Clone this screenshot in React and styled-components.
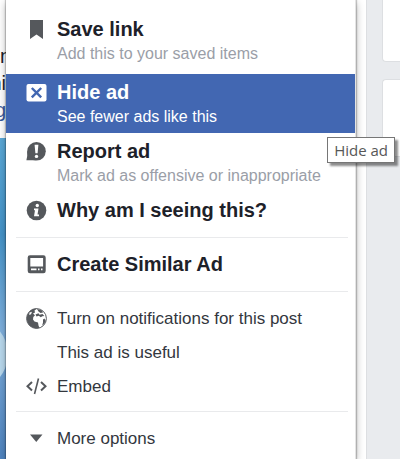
import styled, { createGlobalStyle } from "styled-components";

const colorText = "#1d2129";
const colorPlain = "#33373e";
const colorMuted = "#9a9ea7";
const colorBlue = "#4267b2";
const colorPage = "#e9ebee";
const colorLine = "#dddfe2";
const colorIcon = "#55585c";

const GlobalStyle = createGlobalStyle`
    * {
        box-sizing: border-box;
    }
    body {
        margin: 0;
        overflow: hidden;
        background-color: ${colorPage};
        font-family: "Liberation Sans", Arial, sans-serif;
        color: ${colorText};
    }
`;

const Page = styled.main`
    position: relative;
    display: flex;
    height: 100vh;
    overflow: hidden;
`;

const Feed = styled.section`
    flex: 1;
    background-color: #fff;
    border-right: 1px solid ${colorLine};
`;

const FeedText = styled.div`
    height: 138px;
    padding-top: 43px;
    font-size: 20px;
    line-height: 27px;
`;

const FeedLine = styled.div`
    display: flex;
    justify-content: ${props => props.$start ? "flex-start" : "flex-end"};
    width: 6px;
    color: ${props => props.$link ? "#365899" : colorText};
`;

const FeedPicture = styled.svg`
    display: block;
    width: 90%;
    height: 321px;
`;

const Sidebar = styled.aside`
    display: flex;
    flex-direction: column;
    gap: 17px;
    width: 33px;
    padding-left: 15px;
`;

const SidebarCard = styled.div`
    height: ${props => props.$first ? "62px" : "78px"};
    background-color: #fff;
    border: 1px solid ${colorLine};
    border-width: ${props => props.$first ? "0 0 1px 1px" : "1px 0 1px 1px"};
    border-radius: ${props => props.$first ? "0 0 0 4px" : "4px 0 0 4px"};
`;

const Menu = styled.nav`
    position: absolute;
    top: 0;
    bottom: 0;
    left: 6px;
    right: 44px;
    padding-top: 11px;
    background-color: #fff;
    border-right: 1px solid #e4e4e4;
    box-shadow: 0 0 1px 1px rgba(0, 0, 0, 0.2), 0 3px 8px rgba(0, 0, 0, 0.3);
`;

const MenuGroup = styled.div`
    & + & {
        margin-top: 4px;
    }
`;

const MenuItem = styled.button`
    display: grid;
    grid-template-columns: 21px 1fr;
    column-gap: 10px;
    width: 100%;
    padding: ${props => props.$plain ? "6px 20px 4px" : "6px 20px"};
    border: 0;
    background-color: ${props => props.$active ? colorBlue : "transparent"};
    color: ${props => props.$active ? "#fff" : colorIcon};
    font-family: inherit;
    text-align: left;
    white-space: nowrap;
    cursor: pointer;
`;

const ItemIcon = styled.span`
    display: flex;
    align-items: center;
    justify-content: center;
    height: 24px;
`;

const ItemTitle = styled.span`
    color: ${props => props.$active ? "#fff" : props.$plain ? colorPlain : colorText};
    font-size: ${props => props.$plain ? "17px" : "20px"};
    font-weight: ${props => props.$plain ? 400 : 700};
    line-height: ${props => props.$plain ? "26px" : "24px"};
    height: 24px;
`;

const ItemNote = styled.span`
    grid-column: 2;
    padding-top: 2px;
    color: ${props => props.$active ? "#fff" : colorMuted};
    font-size: 16px;
    line-height: 21px;
`;

const Separator = styled.hr`
    height: 1px;
    margin: 9px 7px 8px 10px;
    border: 0;
    background-color: #e9eaec;
`;

const Tooltip = styled.div`
    position: absolute;
    top: 137px;
    right: 5px;
    padding: 0 6px;
    background-color: #fff;
    border: 1px solid #767676;
    box-shadow: 3px 3px 2px rgba(0, 0, 0, 0.45);
    color: #575757;
    font-family: "Open Sans", sans-serif;
    font-size: 15px;
    line-height: 24px;
`;

function BookmarkIcon() {
    return (
        <svg width="21" height="21" viewBox="0 0 21 21">
            <path d="M4 1h13v19l-6.500-4.500L4 20z" fill="currentColor" />
        </svg>
    );
}

function HideIcon() {
    return (
        <svg width="21" height="21" viewBox="0 0 21 21">
            <rect x="0.500" y="2" width="20" height="17.500" rx="2" fill="currentColor" />
            <path d="M5.800 6l9.400 9.400M15.200 6l-9.400 9.400" stroke={colorBlue} strokeWidth="2.400" />
        </svg>
    );
}

function ReportIcon() {
    return (
        <svg width="21" height="21" viewBox="0 0 21 21">
            <circle cx="10.500" cy="10.300" r="9.300" fill="currentColor" />
            <path d="M1.200 10.300V15L.4 19.300H10z" fill="currentColor" />
            <path d="M8.600 3.800h3.800l-.8 8.400H9.400z" fill="#fff" />
            <circle cx="10.500" cy="15.400" r="1.700" fill="#fff" />
        </svg>
    );
}

function InfoIcon() {
    return (
        <svg width="21" height="21" viewBox="0 0 21 21">
            <circle cx="10.500" cy="10.500" r="9.800" fill="currentColor" />
            <circle cx="11.300" cy="5.500" r="1.700" fill="#fff" />
            <path d="M8 8.500h4.500l-1 6h1.500v1.800H8l1-6H8z" fill="#fff" />
        </svg>
    );
}

function CreateIcon() {
    return (
        <svg width="21" height="21" viewBox="0 0 21 21">
            <rect x="3" y="2.600" width="15.400" height="15.400" rx="1" fill="none" stroke="currentColor" strokeWidth="2.600" />
            <path d="M3 12.500h15v5H3z" fill="currentColor" />
            <path d="M5 15.300h5.500M12 15.300h1.500M15 15.300h1.500" stroke="#fff" strokeWidth="1.800" />
        </svg>
    );
}

function GlobeIcon() {
    return (
        <svg width="21" height="21" viewBox="0 0 21 21">
            <circle cx="10.500" cy="10.500" r="9.900" fill="#fff" stroke="currentColor" strokeWidth="1" />
            <path d="M11 .6A9.900 9.900 0 1 0 13.500 20L12.500 17.500 12 14.500 8.500 13.500 7 11.500 7.300 9 9 7.200 7 5.500 9 4.500 8.500 2.500z" fill="currentColor" />
            <path d="M9.500 6.500l3-1.200 1 1.500 3-.8 1.800 2-2 .3-1.500 1-2-1.500-2.300.7zM11 1l5 1.500 1 2-2.500.5-2-1.500zM17 11.500l1.500-1 1.200 2.500-1.500 3-2 1.500.8-3z" fill="currentColor" />
            <path d="M3.500 4.500l2.500-.8-1 2.500-1.800.8z" fill="#fff" />
        </svg>
    );
}

function EmbedIcon() {
    return (
        <svg width="21" height="21" viewBox="0 0 21 21" fill="none" stroke="currentColor">
            <path d="M6 6L1.500 10.200 6 14.500M15 6l4.500 4.200L15 14.500" strokeWidth="2" />
            <path d="M12.500 2.500l-4 15.500" strokeWidth="1.600" />
        </svg>
    );
}

function MoreIcon() {
    return (
        <svg width="21" height="21" viewBox="0 0 21 21">
            <path d="M4 6.500h12.500l-6.250 7.500z" fill="currentColor" />
        </svg>
    );
}

function Item({ icon, title, note, active, plain }) {
    return (
        <MenuItem type="button" $active={active} $plain={plain}>
            <ItemIcon aria-hidden="true">{icon}</ItemIcon>
            <ItemTitle $active={active} $plain={plain}>{title}</ItemTitle>
            {note && <ItemNote $active={active}>{note}</ItemNote>}
        </MenuItem>
    );
}

export default function App() {
    return (
        <>
            <GlobalStyle />
            <Page>
                <Feed>
                    <FeedText>
                        <FeedLine $start>n</FeedLine>
                        <FeedLine>ni</FeedLine>
                        <FeedLine $link>g</FeedLine>
                    </FeedText>
                    <FeedPicture viewBox="0 0 329 321" preserveAspectRatio="xMinYMin slice" aria-hidden="true">
                        <defs>
                            <linearGradient id="water" x1="0" y1="0" x2="0" y2="1">
                                <stop offset="0" stopColor="#5ba9d8" />
                                <stop offset="0.3" stopColor="#4594c9" />
                                <stop offset="0.6" stopColor="#7fb0de" />
                                <stop offset="1" stopColor="#4f84c0" />
                            </linearGradient>
                        </defs>
                        <rect width="329" height="321" fill="url(#water)" />
                        <circle cx="-28" cy="216" r="36" fill="#b9d9ee" />
                    </FeedPicture>
                </Feed>
                <Sidebar>
                    <SidebarCard $first />
                    <SidebarCard />
                </Sidebar>
                <Menu aria-label="Ad options">
                    <MenuGroup>
                        <Item icon={<BookmarkIcon />} title="Save link" note="Add this to your saved items" />
                    </MenuGroup>
                    <MenuGroup>
                        <Item icon={<HideIcon />} title="Hide ad" note="See fewer ads like this" active />
                        <Item icon={<ReportIcon />} title="Report ad" note="Mark ad as offensive or inappropriate" />
                        <Item icon={<InfoIcon />} title="Why am I seeing this?" />
                    </MenuGroup>
                    <Separator />
                    <Item icon={<CreateIcon />} title="Create Similar Ad" />
                    <Separator />
                    <Item icon={<GlobeIcon />} title="Turn on notifications for this post" plain />
                    <Item title="This ad is useful" plain />
                    <Item icon={<EmbedIcon />} title="Embed" plain />
                    <Separator />
                    <Item icon={<MoreIcon />} title="More options" plain />
                </Menu>
                <Tooltip role="tooltip">Hide ad</Tooltip>
            </Page>
        </>
    );
}
